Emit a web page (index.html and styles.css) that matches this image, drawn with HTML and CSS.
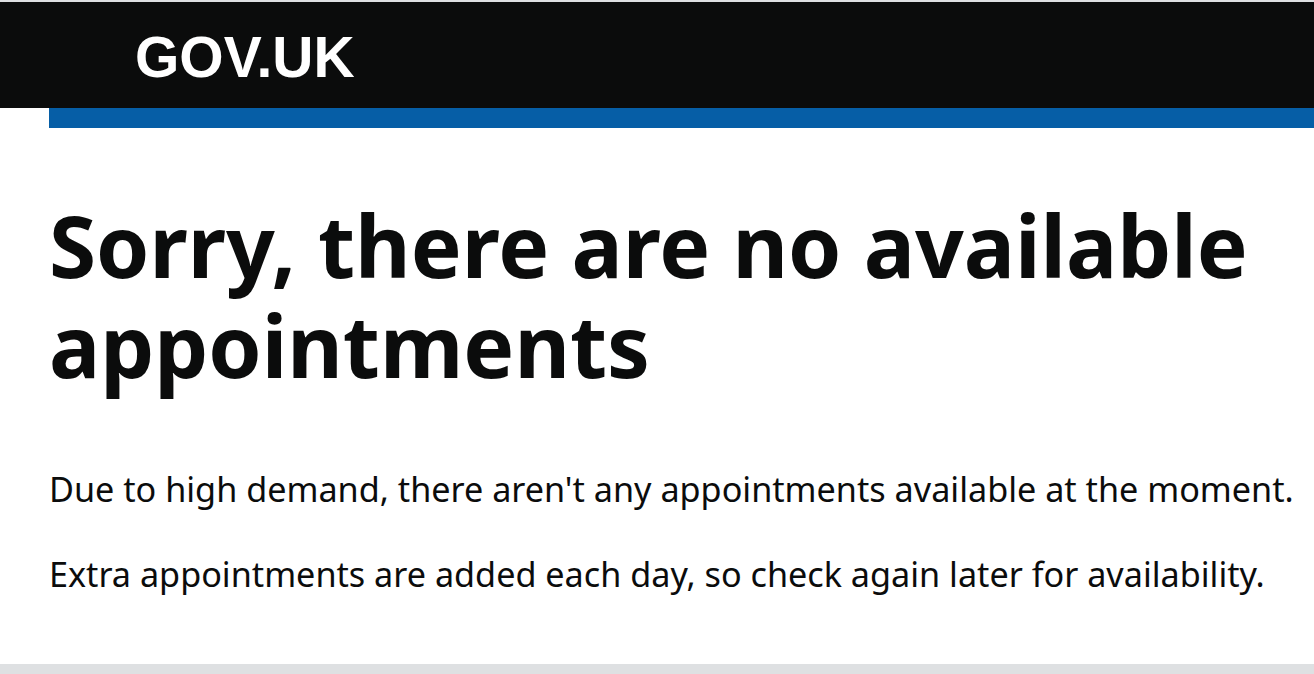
FILE: index.html
```html
<!DOCTYPE html>
<html lang="en">
<head>
	<meta charset="utf-8">
	<title>Sorry, there are no available appointments - GOV.UK</title>
	<link rel="stylesheet" href="styles.css">
</head>
<body>
	<header class="header">
		<div class="header-container">
			<a class="header-logo" href="#">GOV.UK</a>
		</div>
	</header>
	<div class="header-rule"></div>

	<main class="main">
		<h1 class="heading-xl">Sorry, there are no available appointments</h1>
		<p class="body">Due to high demand, there aren't any appointments available at the moment.</p>
		<p class="body">Extra appointments are added each day, so check again later for availability.</p>
	</main>

	<footer class="footer"></footer>
</body>
</html>
```

FILE: styles.css
```css
body {
	margin: 0;
	padding: 0;
	background-color: #ffffff;
	color: #0b0c0c;
	font-family: "Noto Sans", Arial, sans-serif;
}

/* Black bar with the wordmark */
.header {
	background-color: #0b0c0c;
	border-top: 2px solid #dee0e2;
}

.header-container {
	padding: 27px 0 22px 86px;
	margin-left: 49px;
}

.header-logo {
	display: block;
	color: #ffffff;
	text-decoration: none;
	font-family: "Liberation Sans", Arial, sans-serif;
	font-weight: bold;
	font-size: 57px;
	line-height: 57px;
}

/* Blue strip under the header, offset from the left like the container */
.header-rule {
	height: 20px;
	margin-left: 49px;
	background-color: #065ea6;
}

.main {
	padding: 67px 0 30px 49px;
}

.heading-xl {
	margin: 0 0 69px;
	font-weight: 700;
	font-size: 85.5px;
	line-height: 100px;
}

.body {
	margin: 0 0 35px;
	font-weight: 400;
	font-size: 34.2px;
	line-height: 50px;
}

.footer {
	height: 10px;
	background-color: #dee0e2;
}
```
